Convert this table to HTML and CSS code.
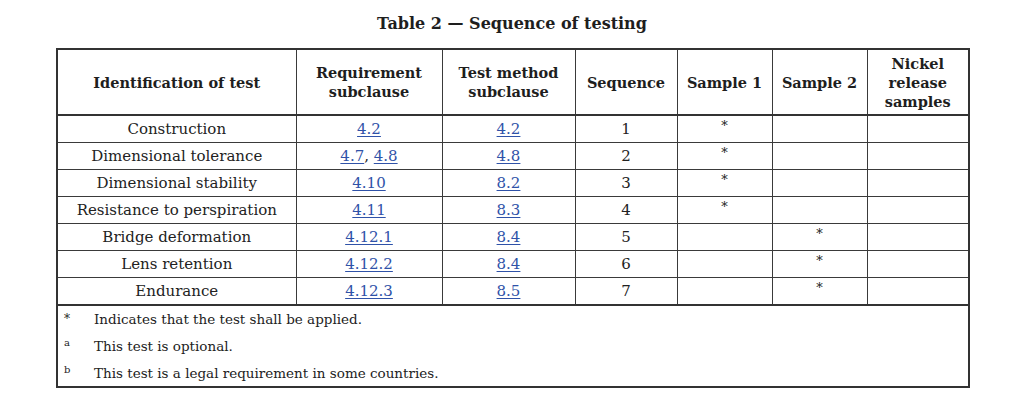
FILE: index.html
```html
<!DOCTYPE html>
<html>
<head>
<meta charset="utf-8">
<link rel="stylesheet" href="styles.css">
</head>
<body>
<div class="page">
  <h1 class="title">Table 2 — Sequence of testing</h1>
  <table class="seq">
    <colgroup>
      <col class="c1"><col class="c2"><col class="c3"><col class="c4"><col class="c5"><col class="c6"><col class="c7">
    </colgroup>
    <thead>
      <tr>
        <th>Identification of test</th>
        <th>Requirement<br>subclause</th>
        <th>Test method<br>subclause</th>
        <th>Sequence</th>
        <th>Sample 1</th>
        <th>Sample 2</th>
        <th>Nickel<br>release<br>samples</th>
      </tr>
    </thead>
    <tbody>
      <tr><td>Construction</td><td><a href="#">4.2</a></td><td><a href="#">4.2</a></td><td>1</td><td class="star">*</td><td></td><td></td></tr>
      <tr><td>Dimensional tolerance</td><td><a href="#">4.7</a>, <a href="#">4.8</a></td><td><a href="#">4.8</a></td><td>2</td><td class="star">*</td><td></td><td></td></tr>
      <tr><td>Dimensional stability</td><td><a href="#">4.10</a></td><td><a href="#">8.2</a></td><td>3</td><td class="star">*</td><td></td><td></td></tr>
      <tr><td>Resistance to perspiration</td><td><a href="#">4.11</a></td><td><a href="#">8.3</a></td><td>4</td><td class="star">*</td><td></td><td></td></tr>
      <tr><td>Bridge deformation</td><td><a href="#">4.12.1</a></td><td><a href="#">8.4</a></td><td>5</td><td></td><td class="star">*</td><td></td></tr>
      <tr><td>Lens retention</td><td><a href="#">4.12.2</a></td><td><a href="#">8.4</a></td><td>6</td><td></td><td class="star">*</td><td></td></tr>
      <tr class="last"><td>Endurance</td><td><a href="#">4.12.3</a></td><td><a href="#">8.5</a></td><td>7</td><td></td><td class="star">*</td><td></td></tr>
    </tbody>
    <tfoot>
      <tr>
        <td colspan="7" class="notes">
          <div class="note"><span class="mark">*</span><span>Indicates that the test shall be applied.</span></div>
          <div class="note"><span class="mark sup">a</span><span>This test is optional.</span></div>
          <div class="note"><span class="mark sup">b</span><span>This test is a legal requirement in some countries.</span></div>
        </td>
      </tr>
    </tfoot>
  </table>
</div>
</body>
</html>
```
FILE: styles.css
```css
html, body {
  margin: 0;
  padding: 0;
  background: #ffffff;
}
body {
  font-family: "DejaVu Serif", "Liberation Serif", serif;
  color: #222222;
}
.page {
  padding: 12px 0 0 56px;
  width: 912px;
}
.title {
  margin: 0 0 12px 0;
  text-align: center;
  font-size: 16px;
  font-weight: bold;
  line-height: 24px;
  color: #1e1e1e;
}
.seq {
  width: 912px;
  border-collapse: collapse;
  table-layout: fixed;
  border: 2px solid #333333;
  font-size: 15px;
}
.c1 { width: 239px; }
.c2 { width: 146px; }
.c3 { width: 133px; }
.c4 { width: 102px; }
.c5 { width: 95px; }
.c6 { width: 95px; }
.c7 { width: 102px; }
.seq th, .seq td {
  border: 1px solid #3a3a3a;
  text-align: center;
  padding: 0;
}
.seq thead tr {
  height: 66px;
}
.seq th {
  font-size: 14.5px;
  font-weight: bold;
  line-height: 19px;
  color: #1e1e1e;
  border-bottom: 2px solid #333333;
}
.seq tbody tr {
  height: 27px;
}
.seq tbody tr.last {
  height: 28px;
}
.seq tbody td {
  line-height: 18px;
  vertical-align: middle;
}
.seq tbody tr.last td {
  border-bottom: 2px solid #333333;
}
.seq td.star {
  vertical-align: top;
  font-size: 13px;
  line-height: 14px;
  padding-top: 3px;
}
.seq a {
  color: #2f52a8;
  text-decoration: underline;
  text-underline-offset: 2px;
}
.seq td.notes {
  text-align: left;
  padding: 0 0 0 6px;
  font-size: 13.5px;
}
.note {
  display: flex;
  height: 27px;
  align-items: center;
}
.note:first-child {
  height: 26px;
}
.mark {
  width: 30px;
  font-size: 12px;
}
.mark.sup {
  font-size: 10px;
  align-self: flex-start;
  padding-top: 5px;
}
```
